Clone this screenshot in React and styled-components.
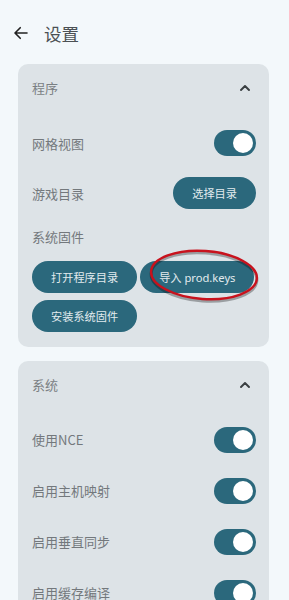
import React from "react";
import styled, { createGlobalStyle } from "styled-components";

const Global = createGlobalStyle`
  html, body { margin: 0; padding: 0; background: #f3f8fb; }
  body { font-family: "Noto Sans", "Noto Sans CJK SC", sans-serif; -webkit-font-smoothing: antialiased; }
`;

const Page = styled.div`
  width: 289px;
  height: 600px;
  overflow: hidden;
  background: #f3f8fb;
`;

const Header = styled.div`
  height: 64px;
  display: flex;
  align-items: center;
  padding: 2px 0 0 12px;
  box-sizing: border-box;
  gap: 14px;
`;

const Title = styled.div`
  font-family: "Noto Sans CJK SC", sans-serif;
  font-size: 17.5px;
  color: #4b5054;
`;

const Cards = styled.div`
  display: flex;
  flex-direction: column;
  gap: 14px;
  padding: 0 20px 0 18px;
`;

const Card = styled.section`
  background: #dde3e7;
  border-radius: 10px;
  padding: 0 13px 15px 14px;
`;

const CardHead = styled.div`
  height: 47px;
  display: flex;
  align-items: center;
  justify-content: space-between;
`;

const CardTitle = styled.div`
  font-family: "Noto Sans CJK SC", sans-serif;
  font-size: 13px;
  color: #7a7f83;
`;

const Body = styled.div`
  padding-top: ${(p) => p.$top}px;
  display: flex;
  flex-direction: column;
`;

const Row = styled.div`
  height: ${(p) => p.$h || 51}px;
  display: flex;
  align-items: center;
  justify-content: space-between;
`;

const Label = styled.div`
  font-family: "Noto Sans CJK SC", sans-serif;
  font-size: 13px;
  color: #73787c;
`;

const Toggle = styled.div`
  width: 42px;
  height: 26px;
  border-radius: 13px;
  background: #2b687c;
  display: flex;
  align-items: center;
  justify-content: flex-end;
  padding-right: 3px;
  box-sizing: border-box;
  &::after {
    content: "";
    width: 20px;
    height: 20px;
    border-radius: 50%;
    background: #ffffff;
  }
`;

const Button = styled.button`
  height: 32px;
  border: none;
  border-radius: 16px;
  padding: 0 19px;
  background: #2b687c;
  color: #e2ebee;
  font-family: "Noto Sans", "Noto Sans CJK SC", sans-serif;
  font-size: 11.2px;
  white-space: nowrap;
  flex: none;
  display: inline-flex;
  align-items: center;
`;

const ButtonGroup = styled.div`
  position: relative;
  margin-top: 7px;
  display: flex;
  flex-direction: column;
  gap: 7px;
`;

const ButtonLine = styled.div`
  display: flex;
  gap: 3px;
`;

const Mark = styled.svg`
  position: absolute;
  left: 115px;
  top: -14px;
  width: 114px;
  height: 58px;
  overflow: visible;
  pointer-events: none;
`;

const Arrow = () => (
  <svg width="18" height="18" viewBox="0 0 24 24" fill="none" stroke="#222" strokeWidth="2.2" strokeLinecap="round" strokeLinejoin="round">
    <path d="M20 12H5M11 5l-7 7 7 7" />
  </svg>
);

const Chevron = () => (
  <svg width="10" height="6" viewBox="0 0 10 6" fill="none" stroke="#3a3f42" strokeWidth="1.9" strokeLinecap="round" strokeLinejoin="round" style={{ marginRight: 6 }}>
    <path d="M1 5l4-4 4 4" />
  </svg>
);

export default function App() {
  return (
    <Page>
      <Global />
      <Header>
        <Arrow />
        <Title>设置</Title>
      </Header>
      <Cards>
        <Card>
          <CardHead>
            <CardTitle>程序</CardTitle>
            <Chevron />
          </CardHead>
          <Body $top={7}>
            <Row $h={50}>
              <Label>网格视图</Label>
              <Toggle />
            </Row>
            <Row $h={50}>
              <Label>游戏目录</Label>
              <Button>选择目录</Button>
            </Row>
            <Row $h={36}>
              <Label>系统固件</Label>
            </Row>
            <ButtonGroup>
              <ButtonLine>
                <Button>打开程序目录</Button>
                <Button>导入 prod.keys</Button>
              </ButtonLine>
              <ButtonLine>
                <Button>安装系统固件</Button>
              </ButtonLine>
              <Mark viewBox="0 0 114 58">
                <ellipse cx="57" cy="30" rx="53" ry="24" fill="none" stroke="rgba(0,0,0,0.3)" strokeWidth="3" transform="rotate(4 57 30)" />
                <ellipse cx="57" cy="28" rx="53" ry="24" fill="none" stroke="#c8121d" strokeWidth="2.4" transform="rotate(4 57 28)" />
              </Mark>
            </ButtonGroup>
          </Body>
        </Card>
        <Card>
          <CardHead>
            <CardTitle>系统</CardTitle>
            <Chevron />
          </CardHead>
          <Body $top={6}>
            <Row>
              <Label>使用NCE</Label>
              <Toggle />
            </Row>
            <Row>
              <Label>启用主机映射</Label>
              <Toggle />
            </Row>
            <Row>
              <Label>启用垂直同步</Label>
              <Toggle />
            </Row>
            <Row>
              <Label>启用缓存编译</Label>
              <Toggle />
            </Row>
          </Body>
        </Card>
      </Cards>
    </Page>
  );
}
